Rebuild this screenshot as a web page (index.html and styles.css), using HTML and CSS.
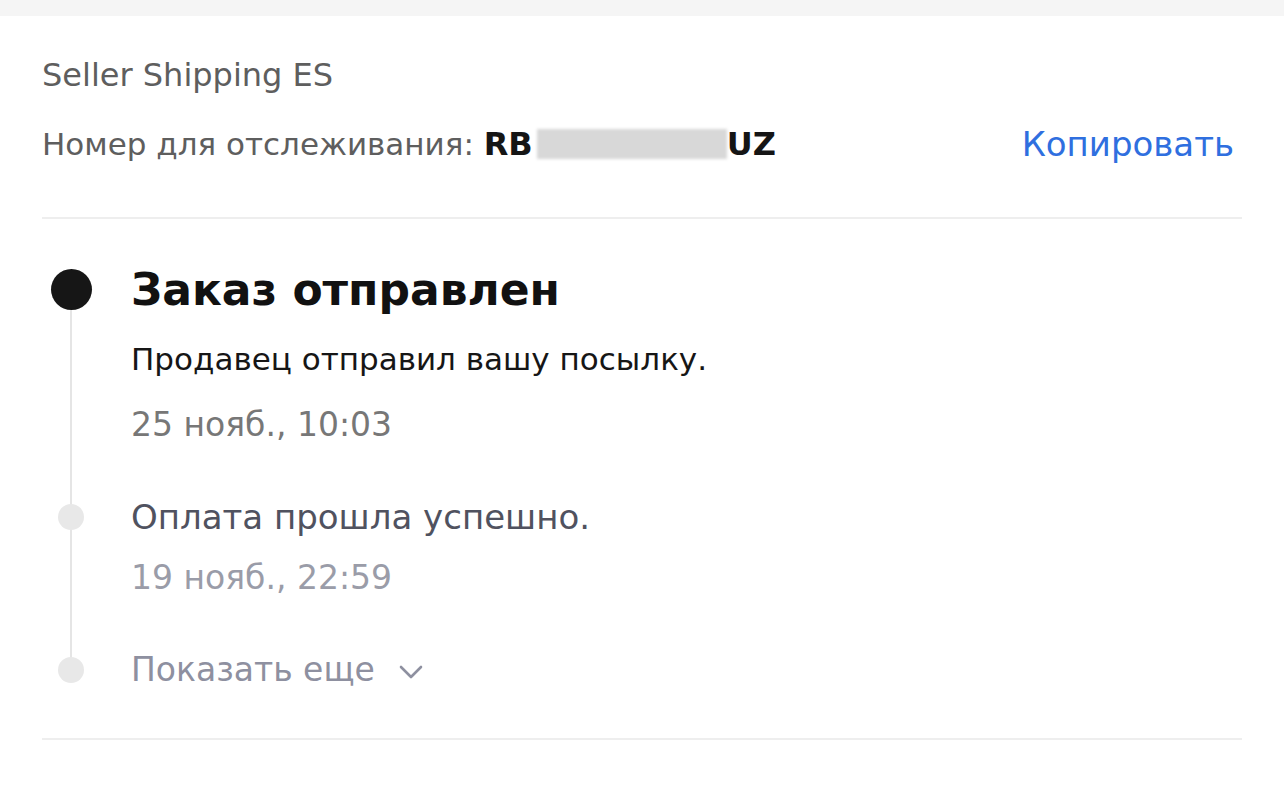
FILE: index.html
```html
<!DOCTYPE html>
<html>
<head lang="ru">
    <meta charset="UTF-8">
    <title>Отслеживание</title>
    <link rel="stylesheet" href="styles.css">
</head>
<body>
<div class="topbar"></div>
<div class="card">
    <div class="carrier">Seller Shipping ES</div>
    <div class="track">
        <div class="trackNum">Номер для отслеживания: <b>RB</b><span class="hidden"></span><b>UZ</b></div>
        <a class="copy" href="#">Копировать</a>
    </div>
    <div class="timeline">
        <div class="line"></div>
        <div class="step current">
            <div class="dot"></div>
            <div class="info">
                <div class="title">Заказ отправлен</div>
                <div class="desc">Продавец отправил вашу посылку.</div>
                <div class="date">25 нояб., 10:03</div>
            </div>
        </div>
        <div class="step">
            <div class="dot"></div>
            <div class="info">
                <div class="desc">Оплата прошла успешно.</div>
                <div class="date">19 нояб., 22:59</div>
            </div>
        </div>
        <div class="step more">
            <div class="dot"></div>
            <div class="info">
                <div class="desc">Показать еще<svg class="chev" width="24" height="14" viewBox="0 0 24 14"><path d="M2 2 L12 12 L22 2" fill="none" stroke="#8e90a0" stroke-width="2.6" stroke-linecap="round" stroke-linejoin="round"/></svg></div>
            </div>
        </div>
    </div>
</div>
</body>
</html>
```

FILE: styles.css
```css
*{
    margin:0;
    padding:0;
    box-sizing: border-box;
}
body{
    background: #fff;
    font-family: "DejaVu Sans", "Noto Sans", sans-serif;
}
.topbar{
    height: 16px;
    background: #f5f5f5;
}
.card{
    padding: 39px 42px 0;
}
.carrier{
    font-size: 32px;
    line-height: 40px;
    color: #5e5e5e;
}
.track{
    display: flex;
    justify-content: space-between;
    align-items: center;
    margin-top: 29px;
    padding-bottom: 53px;
    border-bottom: 2px solid #eeeeee;
}
.trackNum{
    font-size: 31px;
    line-height: 40px;
    color: #5e5e5e;
}
.trackNum b{
    color: #151515;
    font-weight: 700;
    font-size: 32px;
}
.hidden{
    display: inline-block;
    width: 190px;
    height: 30px;
    margin-left: 4px;
    background: #d8d8d8;
    vertical-align: -4px;
    filter: blur(1.5px);
}
.copy{
    font-size: 34px;
    line-height: 40px;
    color: #2f6fdf;
    text-decoration: none;
    margin-right: 8px;
}
.timeline{
    position: relative;
    padding: 46px 0 49px;
    border-bottom: 2px solid #eeeeee;
}
.line{
    position: absolute;
    left: 28px;
    top: 68px;
    width: 2px;
    height: 387px;
    background: #e5e5e5;
}
.step{
    display: grid;
    grid-template-columns: 58px 1fr;
    column-gap: 31px;
}
.dot{
    position: relative;
    width: 26px;
    height: 26px;
    border-radius: 50%;
    background: #e8e8e8;
    justify-self: center;
    margin-top: 6px;
}
.current .dot{
    width: 41px;
    height: 41px;
    background: #161616;
    margin-top: 4px;
}
.title{
    font-size: 44px;
    line-height: 50px;
    font-weight: 700;
    color: #111;
}
.desc{
    font-size: 31px;
    line-height: 38px;
    color: #161616;
}
.current .desc{
    margin-top: 25px;
}
.date{
    font-size: 33px;
    line-height: 38px;
    color: #777;
    margin-top: 28px;
}
.step + .step{
    margin-top: 54px;
}
.step + .step .desc{
    font-size: 34px;
    color: #50525f;
}
.step + .step .date{
    color: #9a9ca8;
    margin-top: 23px;
}
.more{
    margin-top: 57px;
}
.step.more .desc{
    font-size: 33px;
    color: #8e90a0;
}
.chev{
    vertical-align: 2px;
    margin-left: 24px;
}
```
